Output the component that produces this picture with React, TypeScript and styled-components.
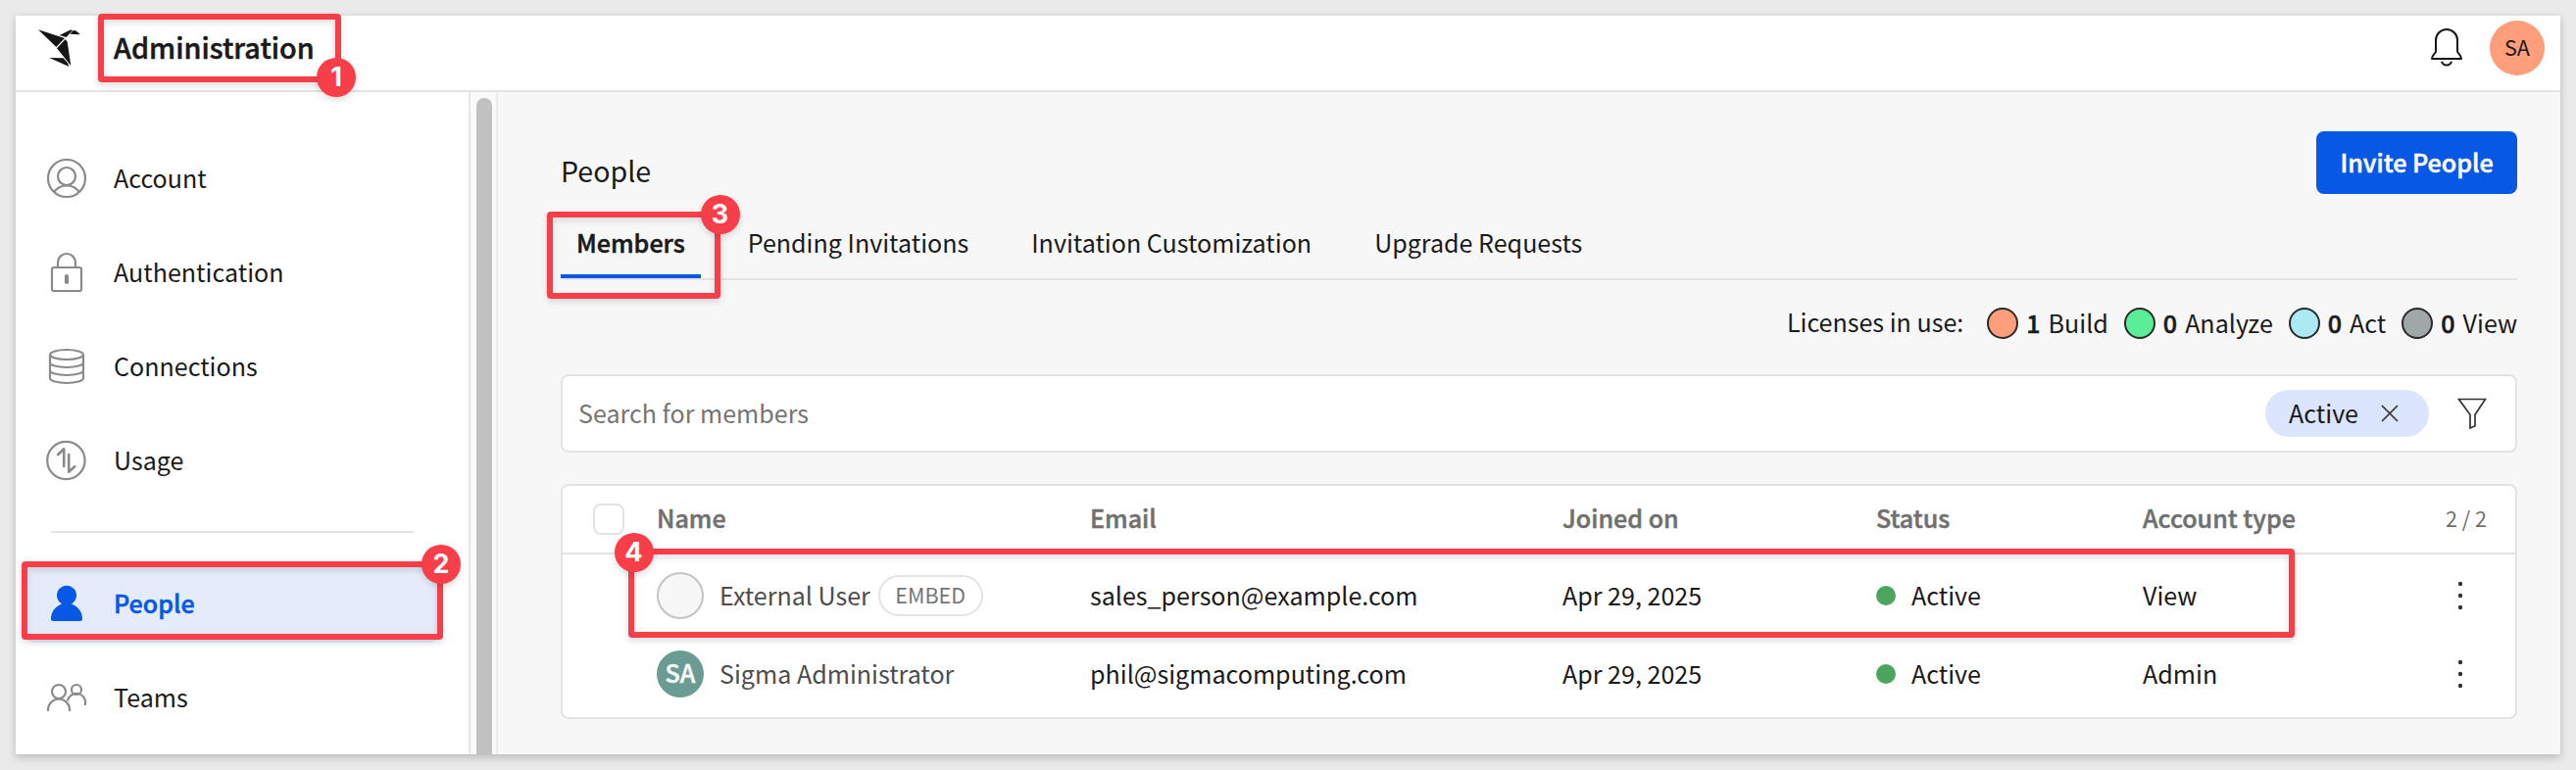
import React from "react";
import styled, { createGlobalStyle, css } from "styled-components";

const GlobalStyle = createGlobalStyle`
  * { box-sizing: border-box; }
  body {
    margin: 0;
    background: #eaeaea;
    color: #1a1a1a;
    font-family: "Noto Sans CJK SC", "Noto Sans", sans-serif;
    font-size: 25.07px;
    line-height: 36px;
    overflow: hidden;
  }
`;

/* Semibold: the medium cut thickened by a hairline stroke. */
const semibold = css`
  font-weight: 500;
  -webkit-text-stroke: 0.5px currentColor;
`;

const Page = styled.div`
  position: relative;
  width: 2628px;
  height: 786px;
  padding: 16px;
  white-space: nowrap;
`;

const Window = styled.div`
  display: flex;
  flex-direction: column;
  height: 754px;
  background: #fff;
  box-shadow: 0 3px 8px rgba(0, 0, 0, 0.22);
`;

const Header = styled.header`
  display: flex;
  align-items: center;
  height: 78px;
  padding: 0 16px 10px 21px;
  border-bottom: 2px solid #e3e3e3;
`;

const Brand = styled.h1`
  flex: 1;
  margin: 0 0 0 35px;
  padding-bottom: 3px;
  font-size: 28.8px;
  ${semibold}
`;

const Avatar = styled.span<{ $size: number; $bg: string; $outline?: boolean }>`
  display: flex;
  flex: none;
  align-items: center;
  justify-content: center;
  width: ${(p) => p.$size}px;
  height: ${(p) => p.$size}px;
  border: ${(p) => (p.$outline ? "2px solid #c4c4c4" : "none")};
  border-radius: 50%;
  background: ${(p) => p.$bg};
`;

const UserInitials = styled.span`
  padding-bottom: 2px;
  font-size: 21.6px;
`;

const MemberInitials = styled.span`
  padding-bottom: 4px;
  color: #f5f9f8;
  ${semibold}
`;

const BellSlot = styled.span`
  display: flex;
  margin-right: 28px;
`;

const Body = styled.div`
  display: flex;
  flex: 1;
  min-height: 0;
`;

const Sidebar = styled.nav`
  display: flex;
  flex-direction: column;
  gap: 16px;
  width: 462px;
  padding: 48px 28px 0 8px;
`;

const NavItem = styled.a<{ $active?: boolean }>`
  display: flex;
  align-items: center;
  flex: none;
  gap: 26px;
  height: 80px;
  padding-left: 22px;
  border-radius: 12px;
  background: ${(p) => (p.$active ? "#e4ebfb" : "transparent")};
  color: ${(p) => (p.$active ? "#0658e5" : "inherit")};
  ${(p) => p.$active && semibold}
`;

/* Label centred beside icons, lifted slightly for optical alignment. */
const Label = styled.span<{ $lift?: number }>`
  padding-bottom: ${(p) => p.$lift ?? 2}px;
`;

const NavDivider = styled.hr`
  width: 370px;
  height: 2px;
  margin: 16px 0 16px 28px;
  border: 0;
  background: #e3e3e3;
`;

const ScrollTrack = styled.div`
  display: flex;
  justify-content: center;
  width: 30px;
  padding: 6px 0 0 2px;
  border-left: 2px solid #e6e6e6;
  border-right: 2px solid #ededed;
  background: #fafafa;
`;

const ScrollThumb = styled.div`
  width: 16px;
  border-radius: 8px 8px 0 0;
  background: #c1c1c1;
`;

const Main = styled.main`
  display: flex;
  flex: 1;
  flex-direction: column;
  padding: 40px 44px 36px 64px;
  background: #f7f7f7;
`;

const TitleRow = styled.div`
  display: flex;
  align-items: center;
  justify-content: space-between;
  height: 64px;
`;

const Title = styled.h2`
  margin: 15px 0 0;
  font-size: 28.6px;
  font-weight: 400;
`;

const InviteButton = styled.button`
  width: 205px;
  height: 64px;
  padding: 0 0 2px;
  border: 0;
  border-radius: 8px;
  background: #0658e5;
  color: #fff;
  font: inherit;
  ${semibold}
`;

const Tabs = styled.div`
  display: flex;
  gap: 32px;
  height: 72px;
  margin-top: 16px;
  border-bottom: 2px solid #e3e3e3;
`;

const Tab = styled.button<{ $active?: boolean }>`
  height: 70px;
  padding: 0 16px;
  border: 0;
  border-bottom: 4px solid ${(p) => (p.$active ? "#0658e5" : "transparent")};
  background: none;
  color: inherit;
  font: inherit;
  ${(p) => p.$active && semibold}
`;

const Licenses = styled.div`
  display: flex;
  align-items: center;
  justify-content: flex-end;
  height: 36px;
  margin: 26px 0 34px;
`;

const LicenseGroup = styled.span`
  display: flex;
  gap: 16px;
  margin-left: 24px;
`;

const License = styled.span`
  display: flex;
  align-items: center;
  gap: 8px;
`;

const Swatch = styled.i<{ $color: string }>`
  width: 32px;
  height: 32px;
  border: 2px solid #292929;
  border-radius: 50%;
  background: ${(p) => p.$color};
`;

const Count = styled.b`
  padding-bottom: 2px;
  ${semibold}
`;

const SearchBar = styled.div`
  display: flex;
  align-items: center;
  height: 80px;
  padding: 0 29px 0 16px;
  border: 2px solid #e3e3e3;
  border-radius: 8px;
  background: #fff;
`;

const Placeholder = styled.span`
  flex: 1;
  padding-bottom: 2px;
  color: #757575;
`;

const Chip = styled.span`
  display: flex;
  align-items: center;
  gap: 23px;
  height: 48px;
  margin-right: 29px;
  padding: 0 31px 0 24px;
  border-radius: 24px;
  background: #dbe5fd;
`;

const Table = styled.div`
  height: 240px;
  margin-top: 32px;
  border: 2px solid #e3e3e3;
  border-radius: 8px;
  background: #fff;
`;

const TableBody = styled.div`
  padding-top: 2px;
`;

const Row = styled.div<{ $head?: boolean }>`
  display: grid;
  grid-template-columns: 31px 65px 442px 482px 320px 272px 1fr auto;
  align-items: center;
  height: ${(p) => (p.$head ? 70 : 80)}px;
  border-bottom: ${(p) => (p.$head ? "2px solid #e3e3e3" : "none")};
`;

const ColumnTitle = styled.span`
  padding-bottom: 4px;
  color: #707070;
  ${semibold}
`;

const Checkbox = styled.span`
  grid-column: 2;
  width: 32px;
  height: 32px;
  border: 2px solid #e3e3e3;
  border-radius: 8px;
`;

const NameCell = styled.div`
  display: flex;
  grid-column: 3;
  align-items: center;
  color: #4d4d4d;
`;

const MemberName = styled.span`
  margin-left: 16px;
  padding-bottom: 2px;
`;

const Tag = styled.span`
  height: 42px;
  margin-left: 8px;
  padding: 0 15.5px;
  border: 2px solid #e3e3e3;
  border-radius: 21px;
  color: #757575;
  font-size: 21.5px;
  line-height: 35px;
`;

const StatusCell = styled.span`
  display: flex;
  align-items: center;
  gap: 16px;
`;

const StatusDot = styled.i`
  width: 20px;
  height: 20px;
  border-radius: 50%;
  background: #4ba55f;
`;

const PageCount = styled.span`
  margin-right: 29px;
  padding-bottom: 2px;
  color: #707070;
  font-size: 21.5px;
`;

const MenuSlot = styled.span`
  display: flex;
  margin-right: 53px;
`;

const Callout = styled.div<{ $x: number; $y: number; $w: number; $h: number }>`
  position: absolute;
  left: ${(p) => p.$x}px;
  top: ${(p) => p.$y}px;
  width: ${(p) => p.$w}px;
  height: ${(p) => p.$h}px;
  border: 6px solid #f83e48;
  border-radius: 4px;
  filter: drop-shadow(0 3px 3px rgba(0, 0, 0, 0.14));
`;

const CalloutBadge = styled.span<{ $x: number; $y: number }>`
  position: absolute;
  left: ${(p) => p.$x - 20}px;
  top: ${(p) => p.$y - 20}px;
  width: 40px;
  height: 40px;
  border-radius: 50%;
  background: #f83e48;
  box-shadow: 0 3px 6px rgba(0, 0, 0, 0.14);
  color: #fff;
  font: 700 27px/39px Inter, sans-serif;
  text-align: center;
`;

const Logo = () => (
  <svg width="44" height="40" viewBox="111 87 132 120" fill="#161616" overflow="visible">
    <path d="M117 91L198 117L172 144Z" />
    <path d="M182 108L217 91L221 94L203 114Z" />
    <path d="M214 104L224 93Q234 92 245 106Z" />
    <path d="M174 148L200 120L206 128L217 201Z" />
    <path d="M151 177L194 178L207 193L211 204Z" />
  </svg>
);

const Bell = () => (
  <svg width="32" height="40" viewBox="0 0 32 40" fill="none" stroke="#161616" strokeWidth="2">
    <path d="M5 12a11 11 0 0 1 22 0v11.5c0 1.600 4 3.600 4 7.500H1c0-3.900 4-5.900 4-7.500z" strokeLinejoin="round" />
    <path d="M11 33.800a5.200 5.200 0 0 0 10 0" />
  </svg>
);

const NavIcon = styled.svg.attrs({ width: 42, height: 42, viewBox: "-21 -21 42 42", fill: "none" })`
  flex: none;
  margin: 0 1px;
  stroke: #8a8a8a;
  stroke-width: 2.2;
`;

const AccountIcon = () => (
  <NavIcon>
    <circle r="19" />
    <circle cy="-2" r="9" />
    <path d="M-12.500 13.500C-9.500 9.500-5 7.500 0 7.500S9.500 9.500 12.500 13.500" />
  </NavIcon>
);

const LockIcon = () => (
  <NavIcon>
    <rect x="-15" y="-5" width="30" height="24" rx="2" />
    <path d="M-9-5.500v-4.500a9 9 0 0 1 18 0v4.500" />
    <rect x="-1" y="3" width="2" height="8" rx="1" />
  </NavIcon>
);

const DatabaseIcon = () => (
  <NavIcon>
    <ellipse cy="-12" rx="17" ry="5" />
    <path d="M-17-12v24c0 2.800 7.600 5 17 5s17-2.200 17-5v-24M-17-4c0 2.800 7.600 5 17 5s17-2.200 17-5M-17 4c0 2.800 7.600 5 17 5s17-2.200 17-5" />
  </NavIcon>
);

const UsageIcon = () => (
  <NavIcon>
    <circle cx="-.6" r="19.200" />
    <path strokeWidth="2.600" strokeLinecap="round" strokeLinejoin="round" d="M-2.800 6v-17.800l-6 5.800M2.200-6v17.800l6-5.600" />
  </NavIcon>
);

const PersonIcon = () => (
  <NavIcon>
    <path
      fill="#0658e5"
      stroke="none"
      d="M-4.800 .500A10 10 0 1 1 4.800 .500C11.500 3 16 8.500 16 15.500q0 2.500-2.500 2.500h-27q-2.500 0-2.500-2.500C-16 8.500-11.500 3-4.800 .500z"
    />
  </NavIcon>
);

const TeamIcon = () => (
  <NavIcon>
    <circle cx="-8" cy="-6" r="7" />
    <path d="M-19 14v-1.500a11 11 0 0 1 22 0v1.500" />
    <circle cx="10" cy="-8" r="5" />
    <path d="M1 3.500A9 9 0 0 1 19 6.500v1.500" />
  </NavIcon>
);

const CloseIcon = () => (
  <svg width="18" height="18" viewBox="0 0 18 18" stroke="#333" strokeWidth="1.700">
    <path d="M1 1L17 17M17 1L1 17" />
  </svg>
);

const FunnelIcon = () => (
  <svg width="30" height="32" viewBox="0 0 30 32" fill="none" stroke="#333" strokeWidth="1.700">
    <path d="M1.500 1.500h27L18 17.300v11.500l-5 2.200V17.300z" />
  </svg>
);

const MoreIcon = () => (
  <svg width="6" height="30" viewBox="0 0 6 30" fill="#333">
    <circle cx="3" cy="3" r="2.200" />
    <circle cx="3" cy="15" r="2.200" />
    <circle cx="3" cy="27" r="2.200" />
  </svg>
);

const topNav = [
  { label: "Account", Icon: AccountIcon },
  { label: "Authentication", Icon: LockIcon },
  { label: "Connections", Icon: DatabaseIcon },
  { label: "Usage", Icon: UsageIcon },
];

const NavGroup = styled.div`
  display: flex;
  flex-direction: column;
  gap: 16px;
`;

const tabs = ["Members", "Pending Invitations", "Invitation Customization", "Upgrade Requests"];

const licenses = [
  { count: 1, label: "Build", color: "#ff9e7a" },
  { count: 0, label: "Analyze", color: "#5aee96" },
  { count: 0, label: "Act", color: "#abe9f3" },
  { count: 0, label: "View", color: "#9fa8a6" },
];

const columns = ["Name", "Email", "Joined on", "Status", "Account type"];

const members = [
  { name: "External User", embed: true, email: "sales_person@example.com", type: "View" },
  { name: "Sigma Administrator", initials: "SA", email: "phil@sigmacomputing.com", type: "Admin" },
];

const callouts = [
  { n: 1, box: [100, 14, 248, 70], badge: [343, 78.5] },
  { n: 2, box: [22, 573, 430, 80], badge: [450, 575.5] },
  { n: 3, box: [558, 216, 177, 89], badge: [734.5, 218.5] },
  { n: 4, box: [641, 560, 1700, 91], badge: [646.5, 563.5] },
];

export default function App() {
  return (
    <Page>
      <GlobalStyle />
      <Window>
        <Header>
          <Logo />
          <Brand>Administration</Brand>
          <BellSlot>
            <Bell />
          </BellSlot>
          <Avatar $size={56} $bg="#ff9e7a">
            <UserInitials>SA</UserInitials>
          </Avatar>
        </Header>
        <Body>
          <Sidebar>
            <NavGroup>
              {topNav.map(({ label, Icon }) => (
                <NavItem key={label}>
                  <Icon />
                  <Label>{label}</Label>
                </NavItem>
              ))}
            </NavGroup>
            <NavDivider />
            <NavItem $active>
              <PersonIcon />
              <Label>People</Label>
            </NavItem>
            <NavItem>
              <TeamIcon />
              <Label>Teams</Label>
            </NavItem>
          </Sidebar>
          <ScrollTrack>
            <ScrollThumb />
          </ScrollTrack>
          <Main>
            <TitleRow>
              <Title>People</Title>
              <InviteButton>Invite People</InviteButton>
            </TitleRow>
            <Tabs>
              {tabs.map((label, i) => (
                <Tab key={label} $active={i === 0}>
                  {label}
                </Tab>
              ))}
            </Tabs>
            <Licenses>
              <Label $lift={4}>Licenses in use:</Label>
              <LicenseGroup>
                {licenses.map((l) => (
                  <License key={l.label}>
                    <Swatch $color={l.color} />
                    <Count>{l.count}</Count>
                    <Label>{l.label}</Label>
                  </License>
                ))}
              </LicenseGroup>
            </Licenses>
            <SearchBar>
              <Placeholder>Search for members</Placeholder>
              <Chip>
                <Label>Active</Label>
                <CloseIcon />
              </Chip>
              <FunnelIcon />
            </SearchBar>
            <Table>
              <Row $head>
                <Checkbox />
                {columns.map((c) => (
                  <ColumnTitle key={c}>{c}</ColumnTitle>
                ))}
                <PageCount>2 / 2</PageCount>
              </Row>
              <TableBody>
                {members.map((m) => (
                  <Row key={m.name}>
                    <NameCell>
                      <Avatar $size={48} $bg={m.initials ? "#6a9c93" : "#f7f7f7"} $outline={!m.initials}>
                        {m.initials && <MemberInitials>{m.initials}</MemberInitials>}
                      </Avatar>
                      <MemberName>{m.name}</MemberName>
                      {m.embed && <Tag>EMBED</Tag>}
                    </NameCell>
                    <Label>{m.email}</Label>
                    <Label>Apr 29, 2025</Label>
                    <StatusCell>
                      <StatusDot />
                      <Label>Active</Label>
                    </StatusCell>
                    <Label>{m.type}</Label>
                    <MenuSlot>
                      <MoreIcon />
                    </MenuSlot>
                  </Row>
                ))}
              </TableBody>
            </Table>
          </Main>
        </Body>
      </Window>
      {callouts.map(({ n, box, badge }) => (
        <React.Fragment key={n}>
          <Callout $x={box[0]} $y={box[1]} $w={box[2]} $h={box[3]} />
          <CalloutBadge $x={badge[0]} $y={badge[1]}>
            {n}
          </CalloutBadge>
        </React.Fragment>
      ))}
    </Page>
  );
}
